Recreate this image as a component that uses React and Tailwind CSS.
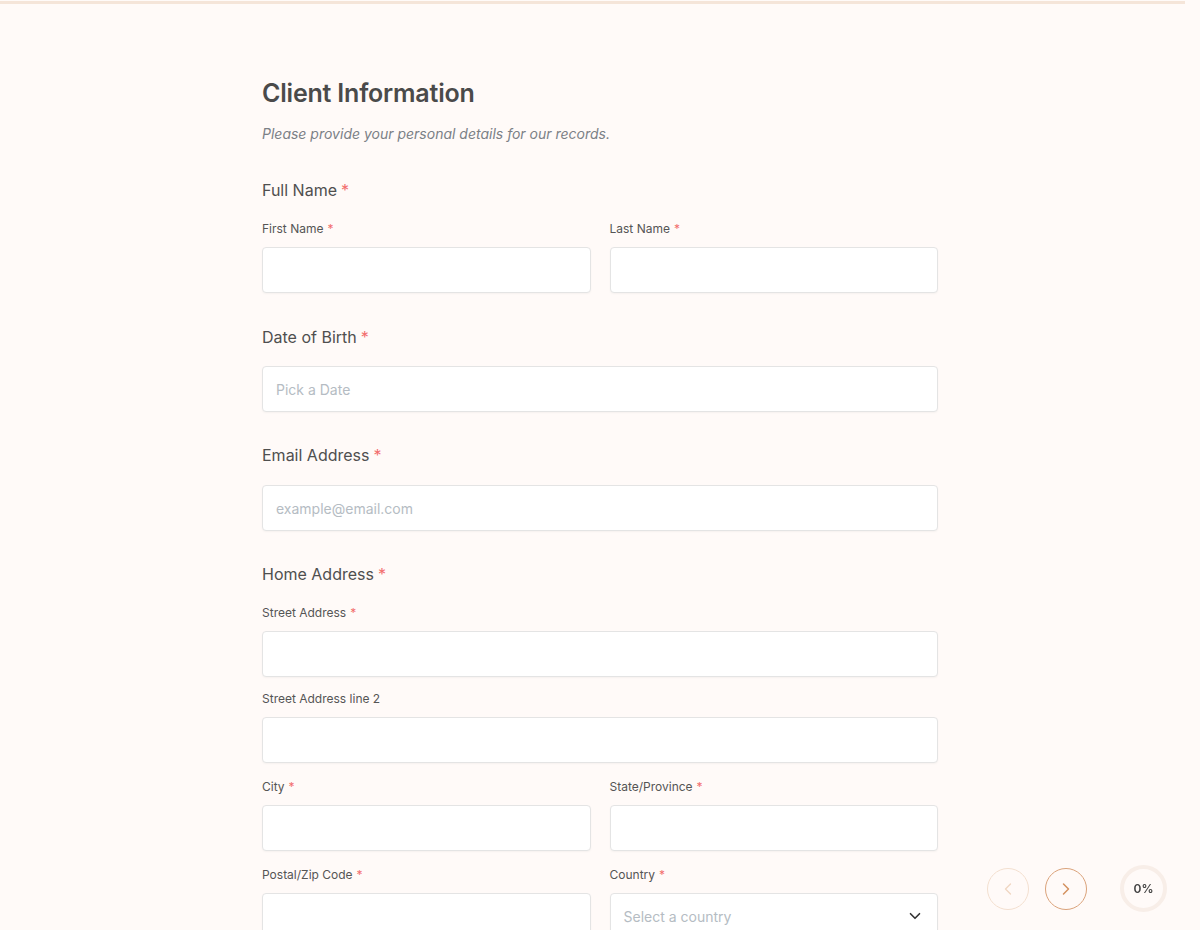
import { ChevronDown, ChevronLeft, ChevronRight } from 'lucide-react';

const Req = () => <span className="text-[#f26d6d] ml-1">*</span>;

const Input = ({ placeholder, className = '' }) => (
    <input
        placeholder={placeholder}
        className={`w-full h-[46px] px-[13px] bg-white border border-[#e4e4e4] rounded-[4px] shadow-[0_1px_2px_rgba(0,0,0,0.04)] text-[14px] text-[#444] placeholder:text-[#b5bcc3] outline-none ${className}`}
    />
);

const SubField = ({ label, required, placeholder }) => (
    <div className="flex-1">
        <label className="block text-[12px] leading-4 text-[#555]">
            {label}
            {required && <Req />}
        </label>
        <div className="mt-2.5">
            <Input placeholder={placeholder} />
        </div>
    </div>
);

const Section = ({ label, children, className = '' }) => (
    <div className={className}>
        <h3 className="text-[16px] leading-6 text-[#4f4f4f]">
            {label}
            <Req />
        </h3>
        {children}
    </div>
);

export default function App() {
    return (
        <div className="min-h-screen bg-[#fffaf8] font-['Inter',sans-serif] relative">
            <div className="pt-px">
                <div className="w-[1185px] h-[3px] bg-[#f5e5d9]" />
            </div>

            <div className="w-[676px] mx-auto pt-[71px] pb-10">
                <h1 className="text-[25px] leading-9 font-semibold text-[#4a4a4a] tracking-[-0.2px]">Client Information</h1>
                <p className="mt-[13px] text-[14px] leading-5 italic text-[#7b8086]">
                    Please provide your personal details for our records.
                </p>

                <Section label="Full Name" className="mt-[34px]">
                    <div className="mt-[19px] flex gap-[19px]">
                        <SubField label="First Name" required />
                        <SubField label="Last Name" required />
                    </div>
                </Section>

                <Section label="Date of Birth" className="mt-8">
                    <div className="mt-[17px]">
                        <Input placeholder="Pick a Date" />
                    </div>
                </Section>

                <Section label="Email Address" className="mt-[31px]">
                    <div className="mt-[18px]">
                        <Input placeholder="example@email.com" />
                    </div>
                </Section>

                <Section label="Home Address" className="mt-[31px]">
                    <div className="mt-[19px] flex flex-col">
                        <SubField label="Street Address" required />
                        <div className="mt-[14px]">
                            <SubField label="Street Address line 2" />
                        </div>
                        <div className="mt-4 flex gap-[19px]">
                            <SubField label="City" required />
                            <SubField label="State/Province" required />
                        </div>
                        <div className="mt-4 flex gap-[19px]">
                            <SubField label="Postal/Zip Code" required />
                            <div className="flex-1">
                                <label className="block text-[12px] leading-4 text-[#555]">
                                    Country
                                    <Req />
                                </label>
                                <div className="mt-2.5 relative">
                                    <div className="w-full h-[46px] px-[13px] bg-white border border-[#e4e4e4] rounded-[4px] shadow-[0_1px_2px_rgba(0,0,0,0.04)] flex items-center justify-between">
                                        <span className="text-[14px] text-[#b5bcc3]">Select a country</span>
                                        <ChevronDown className="w-[18px] h-[18px] text-[#333]" strokeWidth={2.2} />
                                    </div>
                                </div>
                            </div>
                        </div>
                    </div>
                </Section>
            </div>

            {/* floating nav */}
            <div className="fixed left-[987px] top-[865px] flex items-center">
                <button className="w-[42px] h-[42px] rounded-full border border-[#f3dfcf] flex items-center justify-center text-[#f0d6c2]">
                    <ChevronLeft className="w-5 h-5" strokeWidth={1.6} />
                </button>
                <button className="ml-4 w-[42px] h-[42px] rounded-full border border-[#daa27a] flex items-center justify-center text-[#d4915f]">
                    <ChevronRight className="w-5 h-5" strokeWidth={1.8} />
                </button>
                <div className="ml-[33px] w-[47px] h-[47px] rounded-full border-[4px] border-[#f8eee8] flex items-center justify-center">
                    <span className="text-[12px] font-semibold text-[#444]">0%</span>
                </div>
            </div>
        </div>
    );
}
